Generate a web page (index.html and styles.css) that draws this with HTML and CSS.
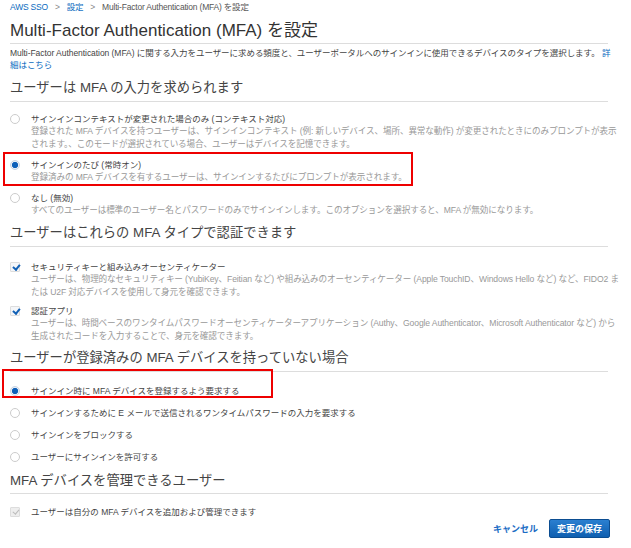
FILE: index.html
```html
<!DOCTYPE html>
<html lang="ja">
<head>
<meta charset="utf-8"/>
<title>Multi-Factor Authentication (MFA) を設定</title>
<link rel="stylesheet" href="styles.css">
</head>
<body>
<div class="page">
	<div class="crumbs">
		<a href="#">AWS SSO</a><span class="sep">&gt;</span><a href="#">設定</a><span class="sep">&gt;</span><span class="cur">Multi-Factor Authentication (MFA) を設定</span>
	</div>
	<h1>Multi-Factor Authentication (MFA) を設定</h1>
	<p class="intro">Multi-Factor Authentication (MFA) に関する入力をユーザーに求める頻度と、ユーザーポータルへのサインインに使用できるデバイスのタイプを選択します。 <a href="#">詳<br>細はこちら</a></p>

	<!-- いつMFAを求めるか -->
	<h2 class="h-first">ユーザーは MFA の入力を求められます</h2>
	<div class="opts first">
		<div class="opt">
			<span class="radio"></span>
			<div class="txt">
				<div class="lbl">サインインコンテキストが変更された場合のみ (コンテキスト対応)</div>
				<div class="desc">登録された MFA デバイスを持つユーザーは、サインインコンテキスト (例: 新しいデバイス、場所、異常な動作) が変更されたときにのみプロンプトが表示<br>されます。、このモードが選択されている場合、ユーザーはデバイスを記憶できます。</div>
			</div>
		</div>
		<div class="opt mark mark1">
			<span class="radio on"></span>
			<div class="txt">
				<div class="lbl">サインインのたび (常時オン)</div>
				<div class="desc">登録済みの MFA デバイスを有するユーザーは、サインインするたびにプロンプトが表示されます。</div>
			</div>
		</div>
		<div class="opt">
			<span class="radio"></span>
			<div class="txt">
				<div class="lbl">なし (無効)</div>
				<div class="desc">すべてのユーザーは標準のユーザー名とパスワードのみでサインインします。このオプションを選択すると、MFA が無効になります。</div>
			</div>
		</div>
	</div>

	<!-- MFAタイプ -->
	<h2 class="h-types">ユーザーはこれらの MFA タイプで認証できます</h2>
	<div class="opts types">
		<div class="opt">
			<span class="check"></span>
			<div class="txt">
				<div class="lbl">セキュリティキーと組み込みオーセンティケーター</div>
				<div class="desc">ユーザーは、物理的なセキュリティキー (YubiKey、Feitian など) や組み込みのオーセンティケーター (Apple TouchID、Windows Hello など) など、FIDO2 ま<br>たは U2F 対応デバイスを使用して身元を確認できます。</div>
			</div>
		</div>
		<div class="opt">
			<span class="check"></span>
			<div class="txt">
				<div class="lbl">認証アプリ</div>
				<div class="desc">ユーザーは、時間ベースのワンタイムパスワードオーセンティケーターアプリケーション (Authy、Google Authenticator、Microsoft Authenticator など) から<br>生成されたコードを入力することで、身元を確認できます。</div>
			</div>
		</div>
	</div>

	<!-- デバイス未登録時 -->
	<h2 class="h-none">ユーザーが登録済みの MFA デバイスを持っていない場合</h2>
	<div class="opts simple">
		<div class="opt mark mark2"><span class="radio on"></span><div class="lbl">サインイン時に MFA デバイスを登録するよう要求する</div></div>
		<div class="opt"><span class="radio"></span><div class="lbl">サインインするために E メールで送信されるワンタイムパスワードの入力を要求する</div></div>
		<div class="opt"><span class="radio"></span><div class="lbl">サインインをブロックする</div></div>
		<div class="opt"><span class="radio"></span><div class="lbl">ユーザーにサインインを許可する</div></div>
	</div>

	<h2 class="h-manage">MFA デバイスを管理できるユーザー</h2>
	<div class="opts manage">
		<div class="opt"><span class="check off"></span><div class="lbl">ユーザーは自分の MFA デバイスを追加および管理できます</div></div>
	</div>

	<div class="foot">
		<a href="#" class="cancel">キャンセル</a>
		<button type="button" class="save">変更の保存</button>
	</div>
</div>
</body>
</html>
```
FILE: styles.css
```css
body{margin:0;background:#fff;font-family:"Liberation Sans",Arial,"Noto Sans CJK JP",sans-serif;color:#444;}
a{color:#0a6bc0;text-decoration:none;}
.page{padding:2px 0 0 10px;}

.crumbs{font-size:8.5px;line-height:10px;height:10px;color:#555;letter-spacing:-0.2px;}
.crumbs .sep{margin:0 7px;color:#888;}

h1{margin:9px 0 0;font-size:17px;font-weight:normal;color:#333;line-height:20px;padding-bottom:2px;border-bottom:1px solid #ddd;width:598px;}
.intro{margin:3px 0 0;font-size:8.5px;line-height:12px;color:#444;letter-spacing:-0.05px;white-space:nowrap;}

h2{margin:0;font-size:13.3px;font-weight:normal;color:#444;line-height:16px;padding-bottom:5px;border-bottom:1px solid #ddd;width:598px;}
.h-first{margin-top:9px;}
.h-types{margin-top:7px;}
.h-none{margin-top:7px;}
.h-manage{margin-top:10px;padding-bottom:4px;}

.opt{display:flex;align-items:flex-start;position:relative;}
.txt{flex:1;}
.lbl{font-size:8.5px;line-height:12px;height:12px;color:#444;white-space:nowrap;}
.desc{font-size:8.6px;line-height:13px;color:#999;letter-spacing:-0.12px;white-space:nowrap;}

.first{margin-top:11px;}
.first .opt{margin-bottom:8px;}
.types{margin-top:14px;}
.types .opt{margin-bottom:6px;}
.simple{margin-top:13px;}
.simple .opt{margin-bottom:10px;}
.manage{margin-top:12px;}

.radio{width:8px;height:8px;border:1px solid #ccc;border-radius:50%;margin:1px 11px 0 0;flex:none;background:#fff;}
.radio.on{border-color:#c8d4e4;background:radial-gradient(circle,#0d5fb8 0,#0d5fb8 2.8px,#e9eef5 3.4px);}
.check{width:8px;height:8px;margin:1px 11px 0 0;flex:none;position:relative;border:1px solid #ddd;border-radius:1px;background:#f4f6f9;}
.check::after{content:"";position:absolute;left:2.5px;top:0;width:2.5px;height:5px;border:solid #1160b5;border-width:0 2px 2px 0;transform:rotate(40deg);}
.check.off{background:#eee;border-color:#ddd;}
.check.off::after{border-color:#bbb;border-width:0 1.5px 1.5px 0;}

/* 注釈の赤枠 */
.mark::after{content:"";position:absolute;border:2px solid #e00;pointer-events:none;box-sizing:border-box;}
.mark1::after{left:-7px;top:-7px;width:410px;height:34px;}
.mark2::after{left:-8px;top:-16px;width:271px;height:29px;}

.foot{display:flex;justify-content:flex-end;align-items:center;width:600px;margin-top:1px;}
.cancel{font-size:9px;font-weight:bold;margin-right:11px;color:#1a6cc4;}
.save{font-family:inherit;font-size:9px;font-weight:bold;color:#fff;height:19px;padding:0 7px;border:1px solid #0b4d91;border-radius:2px;background:linear-gradient(#2a7fd0,#0f5fb0);}
```
